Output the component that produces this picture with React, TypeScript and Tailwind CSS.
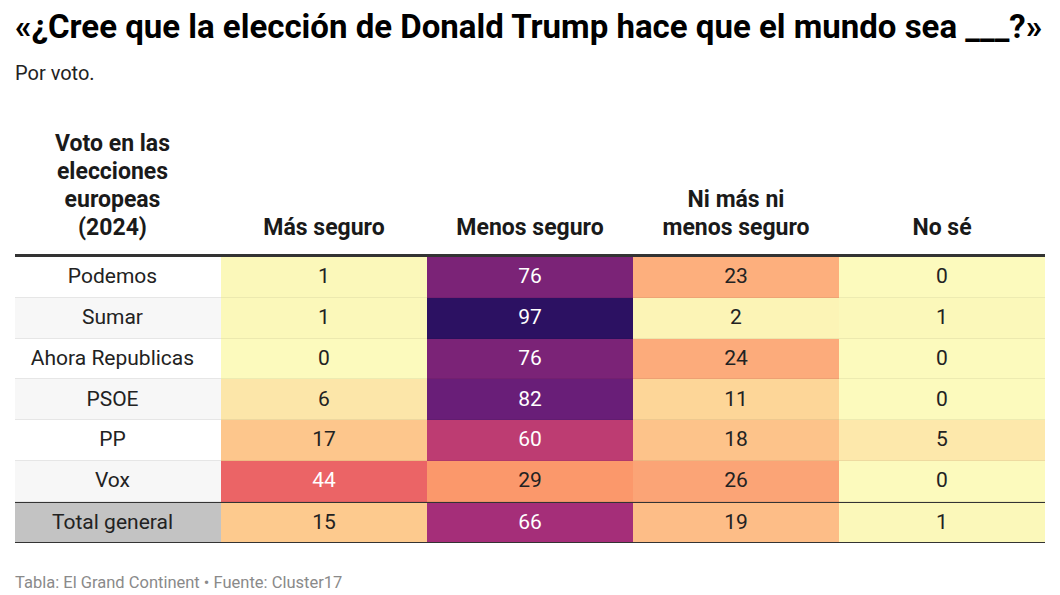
import React from "react";

type Cell = { v: number; bg: string; light?: boolean };
type Row = { name: string; cells: Cell[] };

const rows: Row[] = [
  {
    name: "Podemos",
    cells: [
      { v: 1, bg: "#fbf8ba" },
      { v: 76, bg: "#7b2377", light: true },
      { v: 23, bg: "#fdaf7d" },
      { v: 0, bg: "#fcfabd" },
    ],
  },
  {
    name: "Sumar",
    cells: [
      { v: 1, bg: "#fbf8ba" },
      { v: 97, bg: "#2c1162", light: true },
      { v: 2, bg: "#fcf4b6" },
      { v: 1, bg: "#fbf8ba" },
    ],
  },
  {
    name: "Ahora Republicas",
    cells: [
      { v: 0, bg: "#fcfabd" },
      { v: 76, bg: "#7b2377", light: true },
      { v: 24, bg: "#fcab7b" },
      { v: 0, bg: "#fcfabd" },
    ],
  },
  {
    name: "PSOE",
    cells: [
      { v: 6, bg: "#fce6a9" },
      { v: 82, bg: "#691e78", light: true },
      { v: 11, bg: "#fdd698" },
      { v: 0, bg: "#fcfabd" },
    ],
  },
  {
    name: "PP",
    cells: [
      { v: 17, bg: "#fdc68c" },
      { v: 60, bg: "#bd3c72", light: true },
      { v: 18, bg: "#fdc38a" },
      { v: 5, bg: "#fde8ab" },
    ],
  },
  {
    name: "Vox",
    cells: [
      { v: 44, bg: "#eb6466", light: true },
      { v: 29, bg: "#fb986b" },
      { v: 26, bg: "#fba476" },
      { v: 0, bg: "#fcfabd" },
    ],
  },
];

const total: Row = {
  name: "Total general",
  cells: [
    { v: 15, bg: "#fdca8e" },
    { v: 66, bg: "#a52e79", light: true },
    { v: 19, bg: "#fdbd87" },
    { v: 1, bg: "#fbf8ba" },
  ],
};

const headers = ["Más seguro", "Menos seguro", "Ni más ni\nmenos seguro", "No sé"];

export default function App() {
  return (
    <div
      className="w-[1060px] h-[595px] bg-white px-[15px] text-[#222]"
      style={{ fontFamily: "Roboto, 'Liberation Sans', sans-serif" }}
    >
      <h1 className="pt-[9px] text-[33px] leading-[36px] font-bold text-black whitespace-nowrap">
        «¿Cree que la elección de Donald Trump hace que el mundo sea ___?»
      </h1>
      <p className="mt-[16px] text-[20px] leading-[24px] text-[#222]">Por voto.</p>

      <div className="mt-[45px] w-[1030px]">
        <div className="grid grid-cols-5 border-b-[3px] border-[#333]">
          <div className="pb-[12px] pr-[11px] text-center text-[23px] leading-[28px] font-bold text-[#1a1a1a]">
            Voto en las
            <br />
            elecciones
            <br />
            europeas
            <br />
            (2024)
          </div>
          {headers.map((h) => (
            <div
              key={h}
              className="flex items-end justify-center pb-[12px] text-center text-[23px] leading-[28px] font-bold text-[#1a1a1a] whitespace-pre-line"
            >
              {h}
            </div>
          ))}
        </div>

        {rows.map((r, i) => (
          <div key={r.name} className="grid grid-cols-5 h-[40.83px]">
            <div
              className={`flex items-center justify-center pr-[11px] border-b border-[#e6e6e6] text-[21px] ${
                i % 2 === 1 ? "bg-[#f7f7f7]" : "bg-white"
              }`}
            >
              {r.name}
            </div>
            {r.cells.map((c, j) => (
              <div
                key={j}
                className={`flex items-center justify-center border-b border-[rgba(0,0,0,0.06)] text-[21px] ${
                  c.light ? "text-white" : "text-[#222]"
                }`}
                style={{ backgroundColor: c.bg }}
              >
                {c.v}
              </div>
            ))}
          </div>
        ))}

        <div className="grid grid-cols-5 h-[41px] border-t border-b border-[#333]">
          <div className="flex items-center justify-center pr-[11px] bg-[#c3c3c3] text-[21px]">{total.name}</div>
          {total.cells.map((c, j) => (
            <div
              key={j}
              className={`flex items-center justify-center text-[21px] ${
                c.light ? "text-white" : "text-[#222]"
              }`}
              style={{ backgroundColor: c.bg }}
            >
              {c.v}
            </div>
          ))}
        </div>
      </div>

      <p className="mt-[30px] text-[16.5px] leading-[20px] text-[#8a8a8a]">
        Tabla: El Grand Continent • Fuente: Cluster17
      </p>
    </div>
  );
}
